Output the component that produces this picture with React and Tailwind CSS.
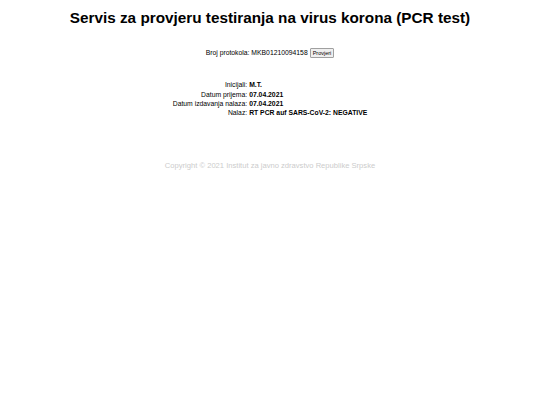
function App() {
  const rows = [
    ['Inicijali:', 'M.T.'],
    ['Datum prijema:', '07.04.2021'],
    ['Datum izdavanja nalaza:', '07.04.2021'],
    ['Nalaz:', 'RT PCR auf SARS-CoV-2: NEGATIVE'],
  ];

  return (
    <div className="min-h-[405px] bg-white text-black font-['Liberation_Sans',Arial,sans-serif]">
      <h1 className="pt-[8px] text-center text-[15.3px] font-bold leading-[20px]">
        Servis za provjeru testiranja na virus korona (PCR test)
      </h1>

      <div className="mt-[20px] flex items-center justify-center gap-[2px] text-[6.8px]">
        <span>Broj protokola: MKB01210094158</span>
        <button className="border border-[#a0a0a0] bg-[#efefef] rounded-[1px] px-[2px] text-[5.5px] leading-[8px]">
          Provjeri
        </button>
      </div>

      <table className="mx-auto mt-[22px] text-[6.8px] leading-[9.4px]">
        <tbody>
          {rows.map(([label, value]) => (
            <tr key={label}>
              <td className="text-right pr-[2px]">{label}</td>
              <td className="font-bold">{value}</td>
            </tr>
          ))}
        </tbody>
      </table>

      <p className="mt-[42px] text-center text-[7.6px] text-[#cccccc]">
        Copyright © 2021 Institut za javno zdravstvo Republike Srpske
      </p>
    </div>
  );
}

export default App;
